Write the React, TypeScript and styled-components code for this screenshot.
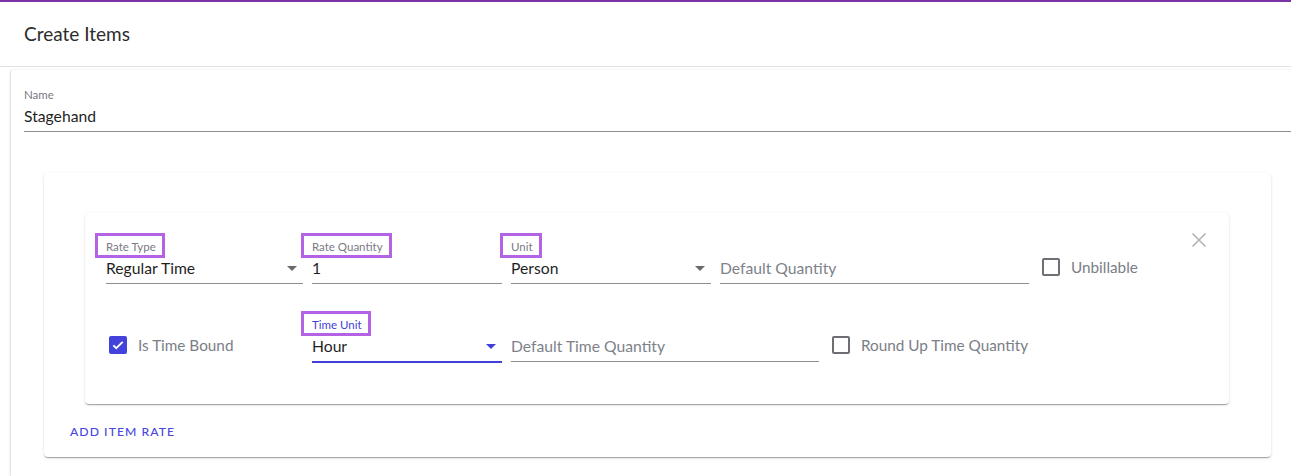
import React from "react";
import styled, { createGlobalStyle } from "styled-components";

const Global = createGlobalStyle`
  html, body { margin: 0; padding: 0; background: #fff; }
  body { font-family: Lato, "Open Sans", sans-serif; color: rgba(0,0,0,0.87); }
  * { box-sizing: border-box; }
`;

const Page = styled.div`
  border-top: 2px solid #7b33a6;
  min-height: 474px;
`;

const Header = styled.header`
  height: 65px;
  display: flex;
  align-items: center;
  padding: 0 24px 2px;
  border-bottom: 1px solid #e2e2e2;
`;

const Title = styled.h1`
  margin: 0;
  font-size: 19px;
  font-weight: 400;
  color: #2c2c2c;
`;

const Body = styled.div`
  padding: 3px 0 0 11px;
`;

const Paper = styled.section`
  background: #fff;
  padding: 18px 0 19px 13px;
  box-shadow: -1px 0 2px rgba(0, 0, 0, 0.12), 0 1px 2px rgba(0, 0, 0, 0.08);
  border-radius: 3px 0 0 0;
`;

const FieldWrap = styled.div<{ $w?: number }>`
  position: relative;
  display: flex;
  flex-direction: column;
  width: ${(p) => (p.$w ? `${p.$w}px` : "100%")};
  flex: none;
`;

const LabelRow = styled.div`
  height: 14px;
  display: flex;
`;

const Label = styled.span<{ $focus?: boolean }>`
  position: relative;
  font-size: 11.5px;
  line-height: 14px;
  color: ${(p) => (p.$focus ? "#4040d8" : "#7a7a84")};
`;

const Highlight = styled.span`
  position: absolute;
  left: -11px;
  right: -9px;
  top: -7px;
  bottom: -4px;
  border: 3px solid #b463e4;
  pointer-events: none;
`;

const Value = styled.div<{ $focus?: boolean; $placeholder?: boolean }>`
  font-size: 15.7px;
  line-height: 20px;
  padding: 4px 0 5px;
  color: ${(p) => (p.$placeholder ? "#7d828a" : "#1f1f1f")};
  border-bottom: ${(p) => (p.$focus ? "2px solid #4040d8" : "1px solid #8e8e8e")};
  margin-bottom: ${(p) => (p.$focus ? "0" : "1px")};
  white-space: nowrap;
`;

const Arrow = styled.svg<{ $focus?: boolean }>`
  position: absolute;
  right: -1px;
  bottom: 5px;
  width: 24px;
  height: 24px;
  fill: ${(p) => (p.$focus ? "#4040d8" : "#6b6b6b")};
`;

type FieldProps = {
  label?: string;
  value: string;
  width?: number;
  select?: boolean;
  focus?: boolean;
  placeholder?: boolean;
  highlight?: boolean;
};

const Field = ({ label, value, width, select, focus, placeholder, highlight }: FieldProps) => (
  <FieldWrap $w={width}>
    <LabelRow>
      {label && (
        <Label $focus={focus}>
          {label}
          {highlight && <Highlight />}
        </Label>
      )}
    </LabelRow>
    <Value $focus={focus} $placeholder={placeholder}>
      {value}
    </Value>
    {select && (
      <Arrow viewBox="0 0 24 24" $focus={focus}>
        <path d="M7 10l5 5 5-5z" />
      </Arrow>
    )}
  </FieldWrap>
);

const OuterCard = styled.div`
  margin: 40px 20px 0 20px;
  padding: 40px 42px 8px 18px;
  border-radius: 4px;
  background: #fff;
  box-shadow: 0px 2px 1px -1px rgba(0, 0, 0, 0.2), 0px 1px 1px 0px rgba(0, 0, 0, 0.14),
    0px 1px 3px 0px rgba(0, 0, 0, 0.12);
`;

const InnerCard = styled.div`
  position: relative;
  margin-left: 23px;
  padding: 27px 21px 41px;
  border-radius: 4px;
  background: #fff;
  display: flex;
  flex-direction: column;
  gap: 33px;
  box-shadow: 0px 2px 1px -1px rgba(0, 0, 0, 0.2), 0px 1px 1px 0px rgba(0, 0, 0, 0.14),
    0px 1px 3px 0px rgba(0, 0, 0, 0.12);
`;

const Row = styled.div`
  display: flex;
  align-items: flex-end;
  gap: 9px;
`;

const CheckItem = styled.label<{ $w?: number; $ml?: number; $pl?: number }>`
  display: flex;
  align-items: center;
  gap: 11px;
  height: 20px;
  margin-bottom: 8px;
  margin-left: ${(p) => p.$ml ?? 0}px;
  padding-left: ${(p) => p.$pl ?? 0}px;
  width: ${(p) => (p.$w ? `${p.$w}px` : "auto")};
  flex: none;
  font-size: 15.3px;
  color: #7a7e86;
  white-space: nowrap;
`;

const Box = styled.span<{ $checked?: boolean }>`
  width: 18px;
  height: 18px;
  border-radius: 2px;
  flex: none;
  display: flex;
  align-items: center;
  justify-content: center;
  border: ${(p) => (p.$checked ? "none" : "2px solid #6e6e74")};
  background: ${(p) => (p.$checked ? "#4343dc" : "transparent")};
`;

const Check = ({ checked, label, width, ml, pad }: { checked?: boolean; label: string; width?: number; ml?: number; pad?: number }) => (
  <CheckItem $w={width} $ml={ml} $pl={pad}>
    <Box $checked={checked}>
      {checked && (
        <svg width="14" height="14" viewBox="0 0 24 24">
          <path d="M4 12.5l5 5L20 6.5" fill="none" stroke="#fff" strokeWidth="3.2" />
        </svg>
      )}
    </Box>
    {label}
  </CheckItem>
);

const CloseBtn = styled.button`
  position: absolute;
  top: 19px;
  right: 22px;
  width: 16px;
  height: 16px;
  padding: 0;
  border: none;
  background: none;
  display: flex;
`;

const AddButton = styled.button`
  margin: 9px 0 0 0;
  padding: 6px 8px;
  height: 36px;
  border: none;
  background: none;
  font-family: Lato, "Open Sans", sans-serif;
  font-size: 12.2px;
  font-weight: 500;
  letter-spacing: 1.05px;
  color: #4747e2;
  text-transform: uppercase;
  display: flex;
  align-items: center;
`;

export default function App() {
  return (
    <>
      <Global />
      <Page>
        <Header>
          <Title>Create Items</Title>
        </Header>
        <Body>
          <Paper>
            <Field label="Name" value="Stagehand" />
            <OuterCard>
              <InnerCard>
                <CloseBtn aria-label="remove">
                  <svg width="16" height="16" viewBox="0 0 16 16">
                    <path d="M1.5 1.5l13 13M14.5 1.5l-13 13" stroke="#b3b3b8" strokeWidth="1.6" />
                  </svg>
                </CloseBtn>
                <Row>
                  <Field label="Rate Type" value="Regular Time" width={197} select highlight />
                  <Field label="Rate Quantity" value="1" width={190} highlight />
                  <Field label="Unit" value="Person" width={200} select highlight />
                  <Field value="Default Quantity" width={309} placeholder />
                  <Check label="Unbillable" ml={4} />
                </Row>
                <Row>
                  <Check label="Is Time Bound" checked width={197} pad={3} />
                  <Field label="Time Unit" value="Hour" width={190} select focus highlight />
                  <Field value="Default Time Quantity" width={308} placeholder />
                  <Check label="Round Up Time Quantity" ml={4} />
                </Row>
              </InnerCard>
              <AddButton>Add Item Rate</AddButton>
            </OuterCard>
          </Paper>
        </Body>
      </Page>
    </>
  );
}
